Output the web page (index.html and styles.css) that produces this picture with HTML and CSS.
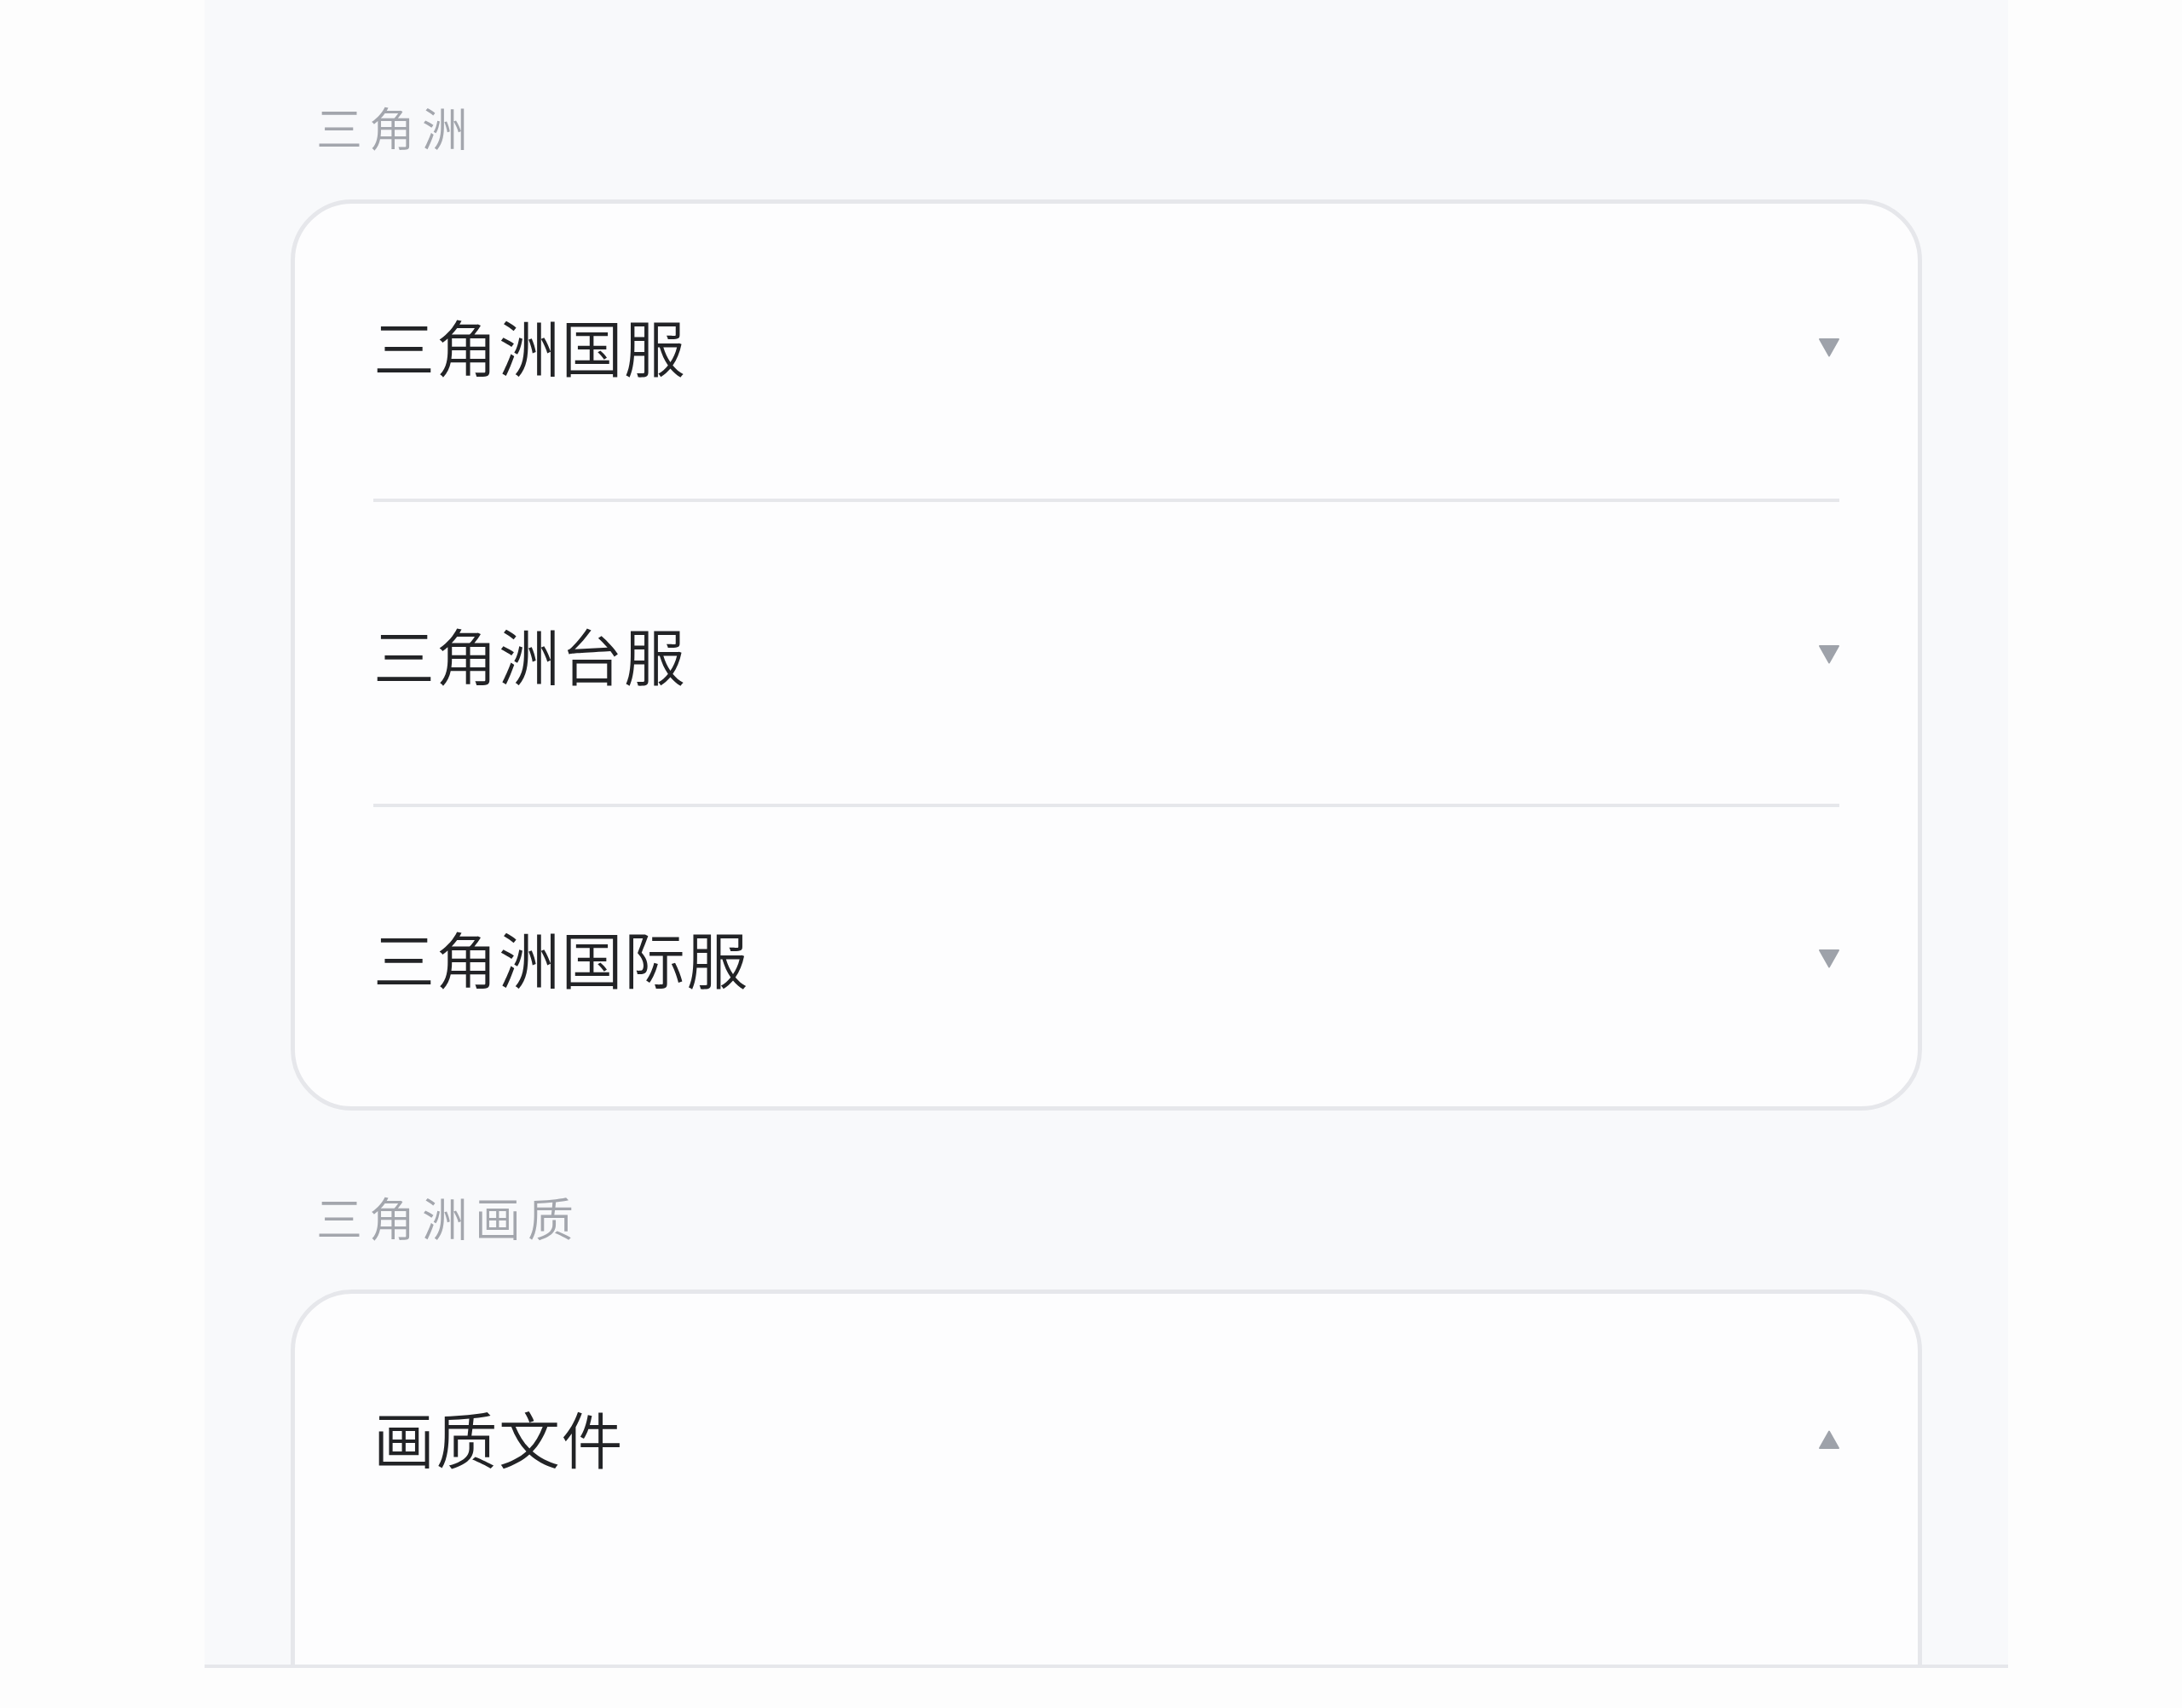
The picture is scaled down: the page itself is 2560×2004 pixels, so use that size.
FILE: index.html
```html
<!DOCTYPE html>
<html lang="zh-CN">
<head>
    <meta charset="UTF-8">
    <meta name="viewport" content="width=device-width, initial-scale=1.0">
    <title>三角洲</title>
    <link rel="stylesheet" href="styles.css">
</head>
<body>
    <div class="panel">
        <div class="section">
            <div class="section-title">三角洲</div>
            <div class="card">
                <div class="row">
                    <span class="row-text">三角洲国服</span>
                    <svg class="arrow" width="24" height="22" viewBox="0 0 24 22"><path d="M1 0h22a1 1 0 0 1 .8 1.5L12.8 21a1 1 0 0 1-1.6 0L.2 1.5A1 1 0 0 1 1 0z"/></svg>
                </div>
                <div class="row">
                    <span class="row-text">三角洲台服</span>
                    <svg class="arrow" width="24" height="22" viewBox="0 0 24 22"><path d="M1 0h22a1 1 0 0 1 .8 1.5L12.8 21a1 1 0 0 1-1.6 0L.2 1.5A1 1 0 0 1 1 0z"/></svg>
                </div>
                <div class="row">
                    <span class="row-text">三角洲国际服</span>
                    <svg class="arrow" width="24" height="22" viewBox="0 0 24 22"><path d="M1 0h22a1 1 0 0 1 .8 1.5L12.8 21a1 1 0 0 1-1.6 0L.2 1.5A1 1 0 0 1 1 0z"/></svg>
                </div>
            </div>
        </div>

        <div class="section">
            <div class="section-title">三角洲画质</div>
            <div class="card card-open">
                <div class="row">
                    <span class="row-text">画质文件</span>
                    <svg class="arrow arrow-up" width="24" height="22" viewBox="0 0 24 22"><path d="M1 0h22a1 1 0 0 1 .8 1.5L12.8 21a1 1 0 0 1-1.6 0L.2 1.5A1 1 0 0 1 1 0z"/></svg>
                </div>
                <div class="row-body"></div>
            </div>
        </div>
    </div>
</body>
</html>
```

FILE: styles.css
```css
:root {
    --page-bg: #fdfdfd;
    --panel-bg: #f8f9fb;
    --card-bg: #fdfdfe;
    --line-color: #e6e7eb;
    --title-color: #a3a6ad;
    --text-color: #222326;
    --arrow-color: #9ea2aa;
}

* {
    margin: 0;
    padding: 0;
    box-sizing: border-box;
}

body {
    font-family: 'Noto Sans CJK SC', 'Noto Sans', sans-serif;
    background-color: var(--page-bg);
    height: 2004px;
    overflow: hidden;
}

.panel {
    width: 2116px;
    height: 1957px;
    margin-left: 240px;
    padding: 116px 101px 0;
    background-color: var(--panel-bg);
    border-bottom: 4px solid var(--line-color);
    overflow: hidden;
    display: flex;
    flex-direction: column;
    gap: 92px;
}

.section {
    display: flex;
    flex-direction: column;
    gap: 53px;
}

.section-title {
    padding-left: 30px;
    font-size: 54px;
    font-weight: 350;
    line-height: 65px;
    letter-spacing: 8px;
    color: var(--title-color);
}

.card {
    background-color: var(--card-bg);
    border: 5px solid var(--line-color);
    border-radius: 72px;
    display: flex;
    flex-direction: column;
}

.card-open {
    flex-shrink: 0;
}

.row {
    height: 358px;
    margin: 0 92px;
    display: flex;
    align-items: center;
    justify-content: space-between;
    border-bottom: 4px solid var(--line-color);
}

.row:first-child {
    height: 350px;
    padding-bottom: 16px;
}

.row:last-child {
    height: 351px;
}

.row:last-child,
.card-open .row {
    border-bottom: none;
}

.row-text {
    font-size: 72px;
    font-weight: 350;
    letter-spacing: 1.5px;
    color: var(--text-color);
}

.arrow {
    fill: var(--arrow-color);
    margin-top: 4px;
}

.row:first-child .arrow {
    margin-top: 7px;
}

.arrow-up {
    transform: rotate(180deg);
}

.row-body {
    height: 400px;
}
```
